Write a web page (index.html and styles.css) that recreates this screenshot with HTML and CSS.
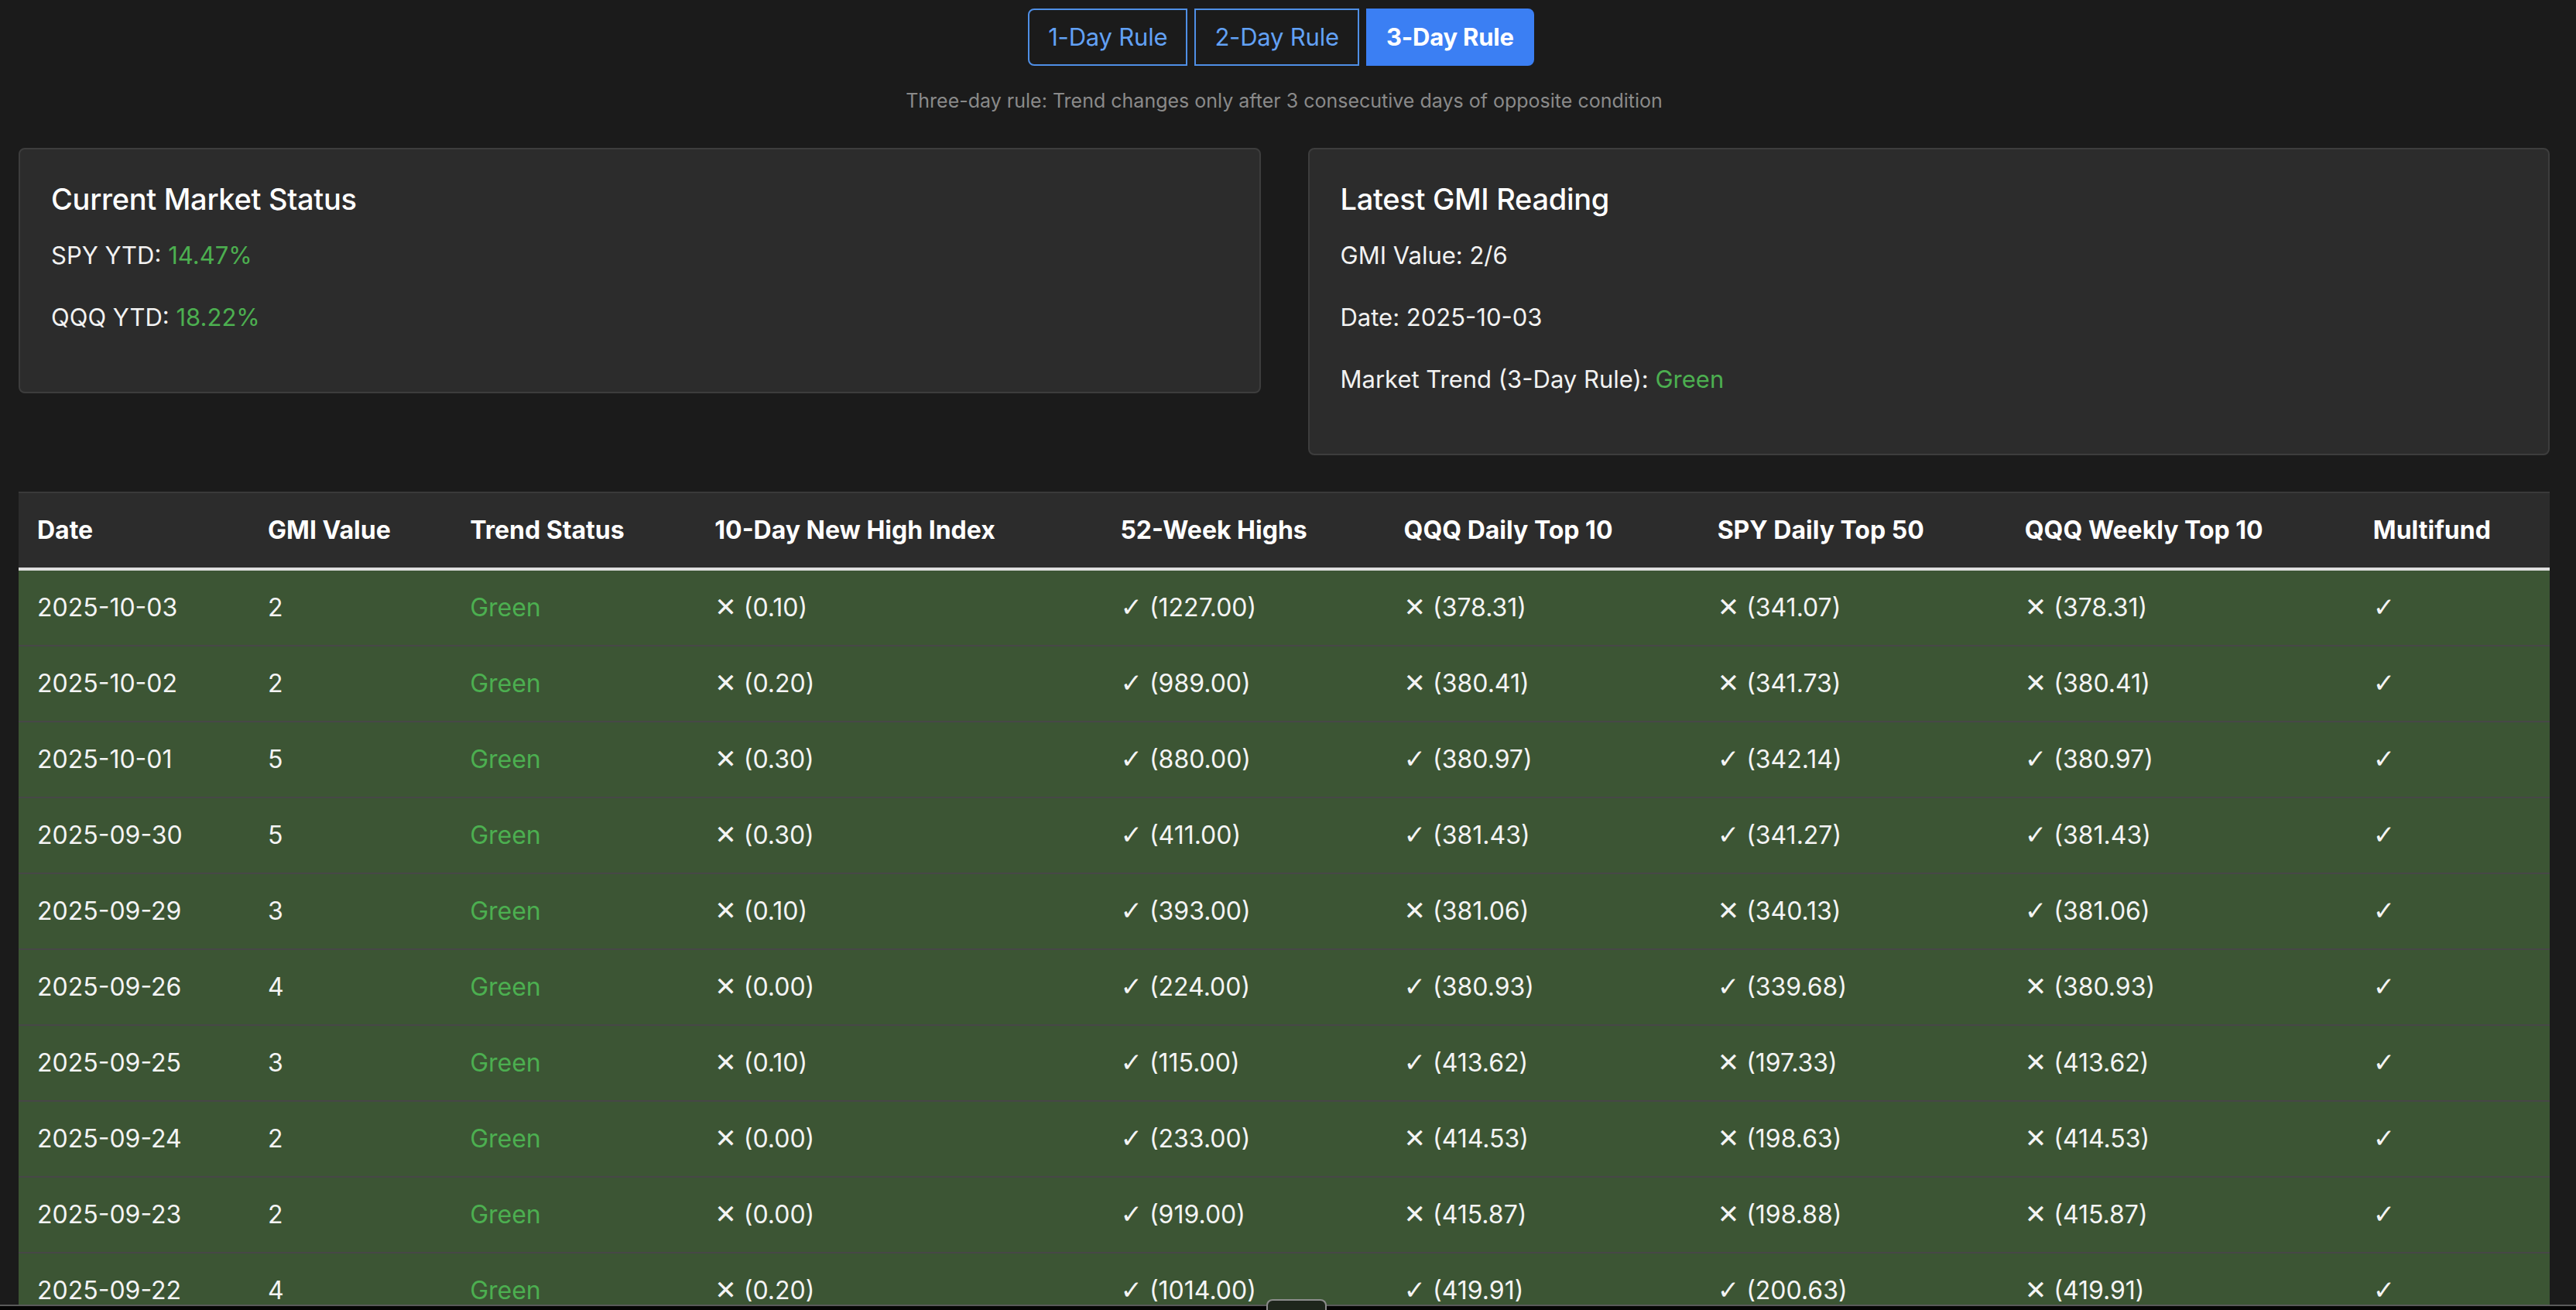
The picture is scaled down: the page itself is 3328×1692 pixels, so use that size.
FILE: index.html
```html
<!DOCTYPE html>
<html lang="en">
<head>
<meta charset="utf-8">
<title>GMI Dashboard</title>
<link rel="stylesheet" href="styles.css">
</head>
<body>
<div class="page">
  <div class="rule-toggle">
    <button class="rule-btn first">1-Day Rule</button>
    <button class="rule-btn">2-Day Rule</button>
    <button class="rule-btn last active">3-Day Rule</button>
  </div>
  <p class="rule-desc">Three-day rule: Trend changes only after 3 consecutive days of opposite condition</p>

  <div class="cards">
    <div class="card">
      <h3 class="card-title">Current Market Status</h3>
      <p class="card-line">SPY YTD: <span class="pos">14.47%</span></p>
      <p class="card-line">QQQ YTD: <span class="pos">18.22%</span></p>
    </div>
    <div class="card">
      <h3 class="card-title">Latest GMI Reading</h3>
      <p class="card-line">GMI Value: 2/6</p>
      <p class="card-line">Date: 2025-10-03</p>
      <p class="card-line">Market Trend (3-Day Rule): <span class="pos">Green</span></p>
    </div>
  </div>

  <table class="gmi-table">
    <colgroup>
      <col class="c-date"><col class="c-gmi"><col class="c-trend"><col class="c-ndh"><col class="c-52w"><col class="c-qqqd"><col class="c-spyd"><col class="c-qqqw"><col class="c-multi">
    </colgroup>
    <thead>
      <tr>
        <th>Date</th><th>GMI Value</th><th>Trend Status</th><th>10-Day New High Index</th><th>52-Week Highs</th><th>QQQ Daily Top 10</th><th>SPY Daily Top 50</th><th>QQQ Weekly Top 10</th><th>Multifund</th>
      </tr>
    </thead>
    <tbody>
      <tr class="row-green"><td>2025-10-03</td><td>2</td><td class="pos">Green</td><td><span class="mk">✕</span> (0.10)</td><td><span class="mk">✓</span> (1227.00)</td><td><span class="mk">✕</span> (378.31)</td><td><span class="mk">✕</span> (341.07)</td><td><span class="mk">✕</span> (378.31)</td><td><span class="mk">✓</span></td></tr>
      <tr class="row-green"><td>2025-10-02</td><td>2</td><td class="pos">Green</td><td><span class="mk">✕</span> (0.20)</td><td><span class="mk">✓</span> (989.00)</td><td><span class="mk">✕</span> (380.41)</td><td><span class="mk">✕</span> (341.73)</td><td><span class="mk">✕</span> (380.41)</td><td><span class="mk">✓</span></td></tr>
      <tr class="row-green"><td>2025-10-01</td><td>5</td><td class="pos">Green</td><td><span class="mk">✕</span> (0.30)</td><td><span class="mk">✓</span> (880.00)</td><td><span class="mk">✓</span> (380.97)</td><td><span class="mk">✓</span> (342.14)</td><td><span class="mk">✓</span> (380.97)</td><td><span class="mk">✓</span></td></tr>
      <tr class="row-green"><td>2025-09-30</td><td>5</td><td class="pos">Green</td><td><span class="mk">✕</span> (0.30)</td><td><span class="mk">✓</span> (411.00)</td><td><span class="mk">✓</span> (381.43)</td><td><span class="mk">✓</span> (341.27)</td><td><span class="mk">✓</span> (381.43)</td><td><span class="mk">✓</span></td></tr>
      <tr class="row-green"><td>2025-09-29</td><td>3</td><td class="pos">Green</td><td><span class="mk">✕</span> (0.10)</td><td><span class="mk">✓</span> (393.00)</td><td><span class="mk">✕</span> (381.06)</td><td><span class="mk">✕</span> (340.13)</td><td><span class="mk">✓</span> (381.06)</td><td><span class="mk">✓</span></td></tr>
      <tr class="row-green"><td>2025-09-26</td><td>4</td><td class="pos">Green</td><td><span class="mk">✕</span> (0.00)</td><td><span class="mk">✓</span> (224.00)</td><td><span class="mk">✓</span> (380.93)</td><td><span class="mk">✓</span> (339.68)</td><td><span class="mk">✕</span> (380.93)</td><td><span class="mk">✓</span></td></tr>
      <tr class="row-green"><td>2025-09-25</td><td>3</td><td class="pos">Green</td><td><span class="mk">✕</span> (0.10)</td><td><span class="mk">✓</span> (115.00)</td><td><span class="mk">✓</span> (413.62)</td><td><span class="mk">✕</span> (197.33)</td><td><span class="mk">✕</span> (413.62)</td><td><span class="mk">✓</span></td></tr>
      <tr class="row-green"><td>2025-09-24</td><td>2</td><td class="pos">Green</td><td><span class="mk">✕</span> (0.00)</td><td><span class="mk">✓</span> (233.00)</td><td><span class="mk">✕</span> (414.53)</td><td><span class="mk">✕</span> (198.63)</td><td><span class="mk">✕</span> (414.53)</td><td><span class="mk">✓</span></td></tr>
      <tr class="row-green"><td>2025-09-23</td><td>2</td><td class="pos">Green</td><td><span class="mk">✕</span> (0.00)</td><td><span class="mk">✓</span> (919.00)</td><td><span class="mk">✕</span> (415.87)</td><td><span class="mk">✕</span> (198.88)</td><td><span class="mk">✕</span> (415.87)</td><td><span class="mk">✓</span></td></tr>
      <tr class="row-green"><td>2025-09-22</td><td>4</td><td class="pos">Green</td><td><span class="mk">✕</span> (0.20)</td><td><span class="mk">✓</span> (1014.00)</td><td><span class="mk">✓</span> (419.91)</td><td><span class="mk">✓</span> (200.63)</td><td><span class="mk">✕</span> (419.91)</td><td><span class="mk">✓</span></td></tr>
    </tbody>
  </table>
</div>
<div class="window-edge"></div>
<div class="scroll-handle"></div>
</body>
</html>
```

FILE: styles.css
```css
html, body {
  margin: 0;
  padding: 0;
  background: #1b1b1b;
}

body {
  font-family: Inter, "Noto Sans", "Liberation Sans", sans-serif;
  color: #f2f2f2;
  overflow: hidden;
}

.page {
  padding: 0 34px 0 24px;
}

.rule-toggle {
  display: flex;
  justify-content: center;
  gap: 9px;
  padding-top: 11px;
  padding-right: 8px;
}

.rule-btn {
  font-family: Inter, "Noto Sans", "Liberation Sans", sans-serif;
  font-size: 31px;
  line-height: 38px;
  padding: 16px 24px;
  background: transparent;
  color: #62a1f5;
  border: 2px solid #4f8fe6;
  border-radius: 0;
  letter-spacing: -0.2px;
}

.rule-btn.first {
  border-radius: 8px 0 0 8px;
}

.rule-btn.last {
  border-radius: 0 8px 8px 0;
}

.rule-btn.active {
  background: #3b7ff3;
  border-color: #3b7ff3;
  color: #ffffff;
  font-weight: 700;
}

.rule-desc {
  margin: 27px 0 0;
  text-align: center;
  font-size: 25px;
  line-height: 36px;
  color: #8a8a8a;
}

.cards {
  display: grid;
  grid-template-columns: 1fr 1fr;
  column-gap: 61px;
  align-items: start;
  margin-top: 43px;
}

.card {
  background: #2c2c2c;
  border: 2px solid #3d3d3d;
  border-radius: 8px;
  padding: 40px;
}

.card-title {
  margin: 0 0 25px;
  font-size: 38px;
  line-height: 48px;
  font-weight: 500;
  color: #ffffff;
  letter-spacing: -0.3px;
}

.card-line {
  margin: 0 0 32px;
  font-size: 31px;
  line-height: 48px;
  color: #f2f2f2;
}

.pos {
  color: #4caf50;
}

.gmi-table {
  margin-top: 47px;
  width: 100%;
  table-layout: fixed;
  border-collapse: collapse;
  font-size: 32px;
}

.c-date { width: 298px; }
.c-gmi { width: 261px; }
.c-trend { width: 316px; }
.c-ndh { width: 524px; }
.c-52w { width: 366px; }
.c-qqqd { width: 405px; }
.c-spyd { width: 397px; }
.c-qqqw { width: 450px; }
.c-multi { width: 252px; }

.gmi-table th {
  background: #2c2c2c;
  color: #ffffff;
  text-align: left;
  font-weight: 700;
  padding: 24px;
  line-height: 48px;
  border-top: 2px solid #3a3a3a;
  border-bottom: 4px solid #dedede;
  white-space: nowrap;
}

.gmi-table td {
  padding: 24px;
  height: 48px;
  line-height: 48px;
  border-bottom: 2px solid #474747;
  color: #f4f4f4;
  white-space: nowrap;
}

.row-green td {
  background: #3c5534;
}

.gmi-table td.pos {
  color: #4caf50;
}

.mk {
  font-family: "DejaVu Sans", sans-serif;
  font-size: 34px;
  line-height: 0;
}

.window-edge {
  position: fixed;
  left: 0;
  right: 0;
  bottom: 0;
  height: 5px;
  background: #050505;
  border-top: 2px solid #5a5a5a;
}

.scroll-handle {
  position: fixed;
  left: 1636px;
  bottom: 0;
  width: 74px;
  height: 12px;
  border: 2px solid #8c8c8c;
  border-bottom: none;
  border-radius: 8px 8px 0 0;
  background: #1e261c;
}
```
